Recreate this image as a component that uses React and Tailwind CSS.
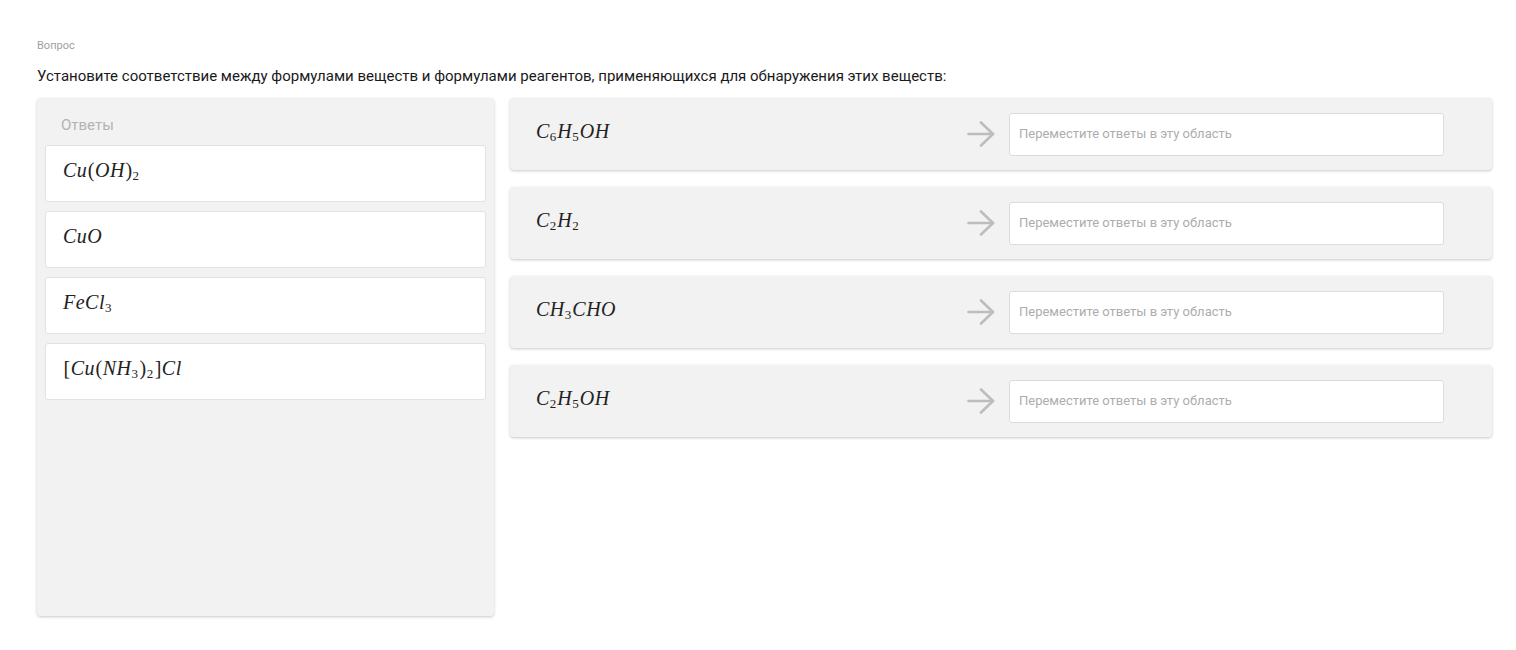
import { Fragment } from "react";

// formula tokens: [text, kind] where kind is "i" (italic letter), "u" (upright) or "s" (subscript)
const answers = [
  [["Cu", "i"], ["(", "u"], ["OH", "i"], [")", "u"], ["2", "s"]],
  [["CuO", "i"]],
  [["FeCl", "i"], ["3", "s"]],
  [["[", "u"], ["Cu", "i"], ["(", "u"], ["NH", "i"], ["3", "s"], [")", "u"], ["2", "s"], ["]", "u"], ["Cl", "i"]],
];

const questions = [
  [["C", "i"], ["6", "s"], ["H", "i"], ["5", "s"], ["OH", "i"]],
  [["C", "i"], ["2", "s"], ["H", "i"], ["2", "s"]],
  [["C", "i"], ["H", "i"], ["3", "s"], ["CHO", "i"]],
  [["C", "i"], ["2", "s"], ["H", "i"], ["5", "s"], ["OH", "i"]],
];

function Formula({ tokens }) {
  return (
    <span className="font-['Liberation_Serif','Times_New_Roman',serif] text-[20px] leading-none text-[#222] whitespace-nowrap">
      {tokens.map(([t, kind], i) => (
        <Fragment key={i}>
          {kind === "i" && <i className="tracking-[0.5px]">{t}</i>}
          {kind === "u" && <span className="px-[0.5px]">{t}</span>}
          {kind === "s" && (
            <span className="relative top-[3px] text-[13px] pr-[1px]">{t}</span>
          )}
        </Fragment>
      ))}
    </span>
  );
}

function Arrow() {
  return (
    <svg width="28" height="26" viewBox="0 0 28 26" fill="none" stroke="#bdbdbd" strokeWidth="2.6" strokeLinecap="round" strokeLinejoin="round">
      <path d="M1.5 13H26" />
      <path d="M14 1.5 26 13 14 24.5" />
    </svg>
  );
}

export default function App() {
  return (
    <div className="bg-white min-h-screen pl-[37px] pr-[24px] pt-[39px] font-['Roboto',sans-serif]">
      <p className="text-[11px] leading-[14px] text-[#a0a0a0]">Вопрос</p>

      <p className="mt-[14px] text-[15px] leading-[18px] text-[#1a1a1a]">
        Установите соответствие между формулами веществ и формулами реагентов, применяющихся для обнаружения этих веществ:
      </p>

      <div className="mt-[13px] flex gap-[16px] items-start">
        {/* ANSWERS */}
        <div className="w-[457px] h-[518px] bg-[#f2f2f2] shadow-[0_1px_3px_rgba(0,0,0,0.22)] rounded-sm px-2 pt-[17px]">
          <p className="pl-4 text-[15px] leading-[20px] text-[#b3b3b3] mb-[10px]">Ответы</p>
          <div className="flex flex-col gap-[9px]">
            {answers.map((f, i) => (
              <div
                key={i}
                className="h-[57px] bg-white border border-[#e2e2e2] rounded-[3px] flex items-center pl-[17px]"
              >
                <div className="-mt-[3px]">
                  <Formula tokens={f} />
                </div>
              </div>
            ))}
          </div>
        </div>

        {/* QUESTIONS */}
        <div className="flex-1 flex flex-col gap-[17px]">
          {questions.map((f, i) => (
            <div
              key={i}
              className="h-[72px] bg-[#f2f2f2] shadow-[0_1px_3px_rgba(0,0,0,0.22)] rounded-sm flex items-center pl-[26px] pr-[48px]"
            >
              <div className="flex-1 -mt-[3px]">
                <Formula tokens={f} />
              </div>
              <Arrow />
              <div className="ml-[14px] w-[435px] h-[43px] bg-white border border-[#dcdcdc] rounded-[3px] flex items-center pl-[9px] text-[13px] text-[#adadad]">
                Переместите ответы в эту область
              </div>
            </div>
          ))}
        </div>
      </div>
    </div>
  );
}
